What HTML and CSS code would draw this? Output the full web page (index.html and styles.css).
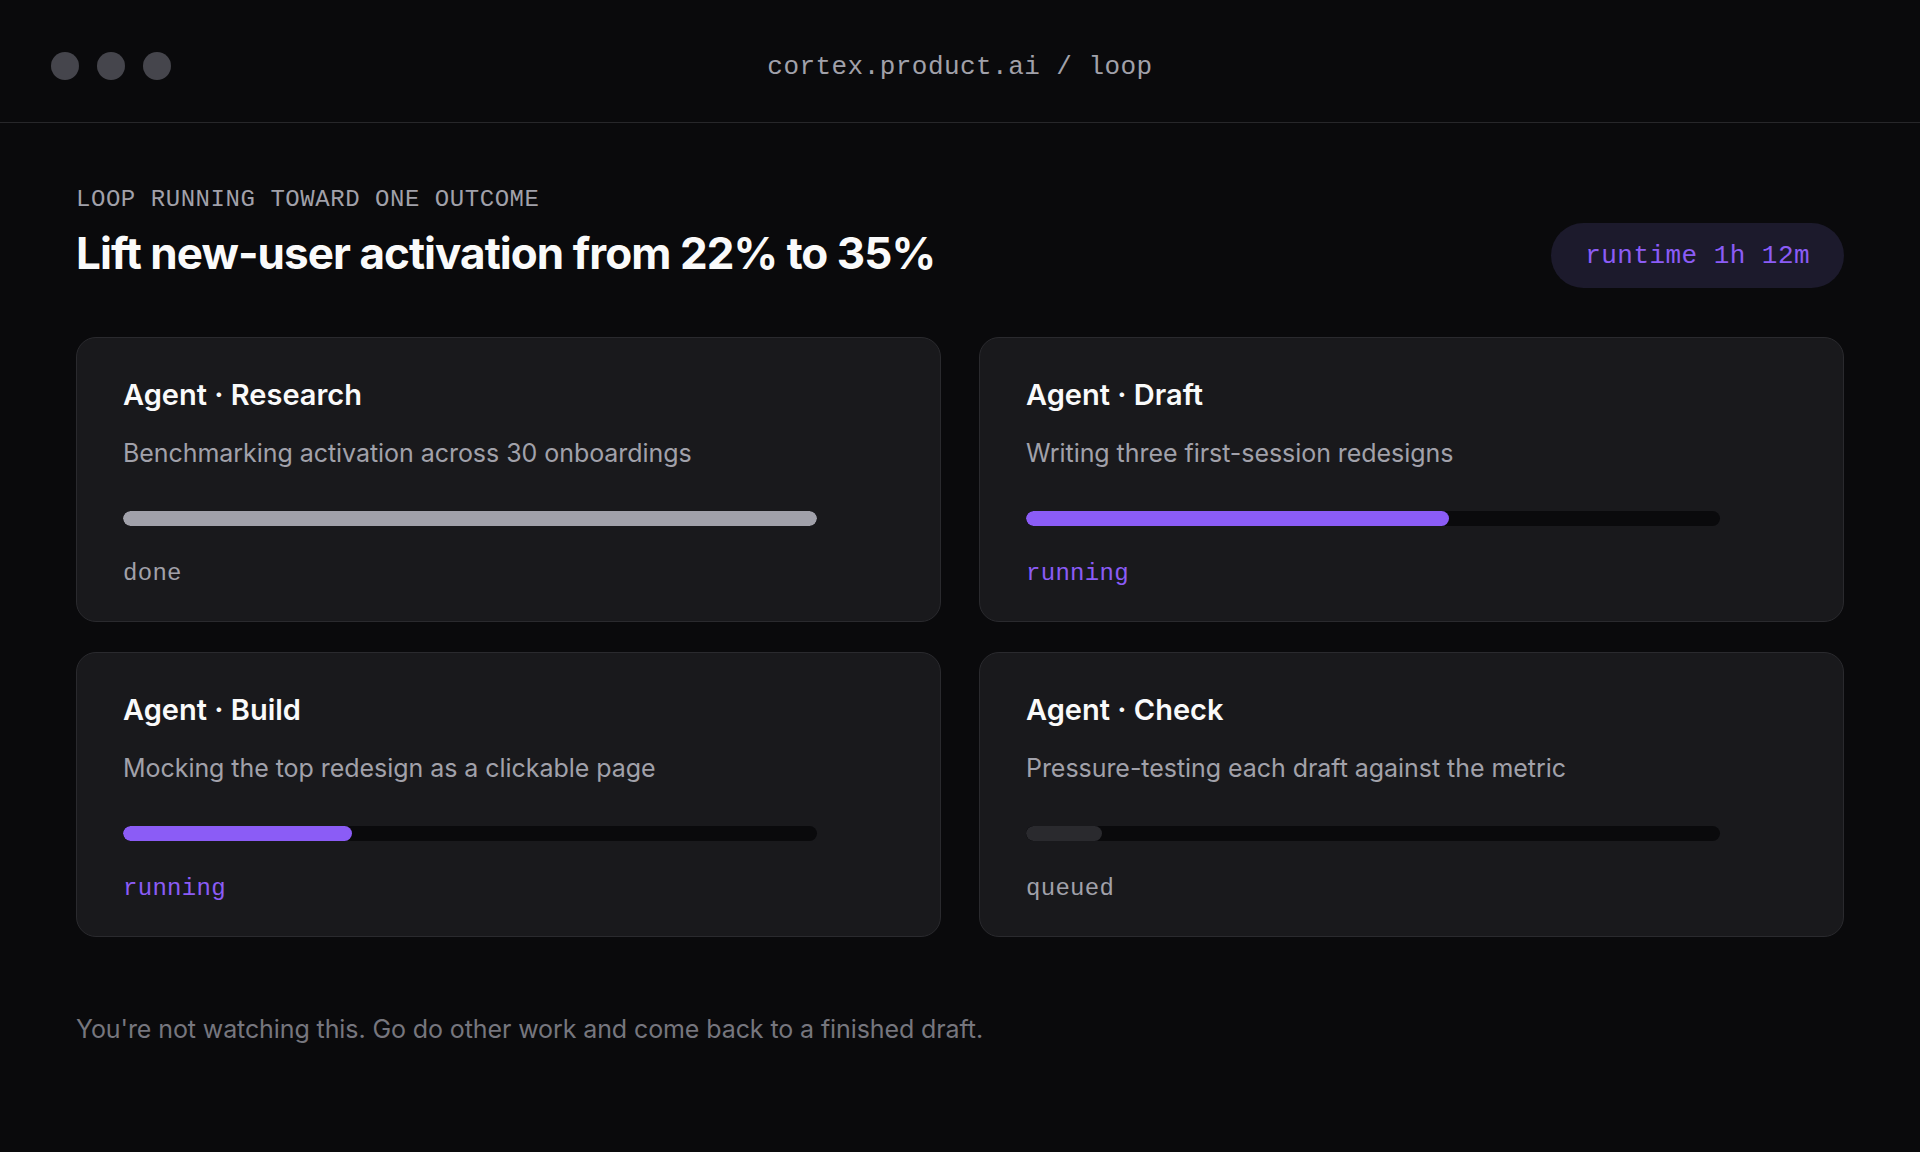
FILE: index.html
```html
<!DOCTYPE html>
<html lang="en">
<head>
<meta charset="utf-8">
<title>cortex.product.ai / loop</title>
<link rel="stylesheet" href="styles.css">
</head>
<body>
<header class="topbar">
  <div class="dots">
    <span class="dot"></span><span class="dot"></span><span class="dot"></span>
  </div>
  <div class="url">cortex.product.ai / loop</div>
  <div class="spacer"></div>
</header>
<main class="main">
  <div class="eyebrow">LOOP RUNNING TOWARD ONE OUTCOME</div>
  <div class="headrow">
    <h1 class="title">Lift new-user activation from 22% to 35%</h1>
    <div class="pill">runtime 1h 12m</div>
  </div>
  <section class="grid">
    <article class="card">
      <h2 class="card-title">Agent · Research</h2>
      <p class="card-desc">Benchmarking activation across 30 onboardings</p>
      <div class="track"><div class="fill fill-done" style="width:100%"></div></div>
      <div class="status status-muted">done</div>
    </article>
    <article class="card">
      <h2 class="card-title">Agent · Draft</h2>
      <p class="card-desc">Writing three first-session redesigns</p>
      <div class="track"><div class="fill fill-run" style="width:61%"></div></div>
      <div class="status status-run">running</div>
    </article>
    <article class="card">
      <h2 class="card-title">Agent · Build</h2>
      <p class="card-desc">Mocking the top redesign as a clickable page</p>
      <div class="track"><div class="fill fill-run" style="width:33%"></div></div>
      <div class="status status-run">running</div>
    </article>
    <article class="card">
      <h2 class="card-title">Agent · Check</h2>
      <p class="card-desc">Pressure-testing each draft against the metric</p>
      <div class="track"><div class="fill fill-queued" style="width:11%"></div></div>
      <div class="status status-muted">queued</div>
    </article>
  </section>
  <p class="footnote">You're not watching this. Go do other work and come back to a finished draft.</p>
</main>
</body>
</html>
```
FILE: styles.css
```css
* { box-sizing: border-box; }
html, body { margin: 0; padding: 0; }
body {
  background: #0a0a0c;
  color: #fafafa;
  font-family: Inter, "Noto Sans", sans-serif;
  width: 1920px;
  height: 1152px;
  overflow: hidden;
}
.topbar {
  height: 123px;
  border-bottom: 1px solid #27272a;
  display: grid;
  grid-template-columns: 1fr auto 1fr;
  align-items: center;
  padding: 10px 51px 0;
}
.dots { display: flex; gap: 18px; }
.dot {
  width: 28px; height: 28px; border-radius: 50%;
  background: #45454c;
  display: block;
}
.url {
  font-family: "Liberation Mono", monospace;
  font-size: 26px;
  letter-spacing: 0.45px;
  color: #a1a1aa;
  margin-top: 2px;
}
.main { padding: 0 76px; }
.eyebrow {
  margin-top: 63px;
  font-family: "Liberation Mono", monospace;
  font-size: 24px;
  line-height: 28px;
  letter-spacing: 0.55px;
  color: #a1a1aa;
}
.headrow {
  margin-top: 9px;
  display: flex;
  justify-content: space-between;
  align-items: center;
}
.title {
  margin: 0 0 5px 0;
  font-size: 44px;
  line-height: 52px;
  font-weight: 700;
  letter-spacing: -0.95px;
  color: #fafafa;
}
.pill {
  height: 65px;
  padding: 0 34px;
  border-radius: 33px;
  background: #1c1a2c;
  color: #8b5cf6;
  font-family: "Liberation Mono", monospace;
  font-size: 26px;
  letter-spacing: 0.45px;
  display: flex;
  align-items: center;
}
.grid {
  margin-top: 49px;
  display: grid;
  grid-template-columns: 1fr 1fr;
  gap: 30px 38px;
}
.card {
  background: #19191c;
  border: 1px solid #2a2a2e;
  border-radius: 20px;
  padding: 39px 46px 33px;
}
.card-title {
  margin: 0;
  font-size: 29px;
  line-height: 36px;
  font-weight: 600;
  letter-spacing: 0;
  color: #fafafa;
}
.card-desc {
  margin: 24px 0 0;
  font-size: 25px;
  line-height: 32px;
  color: #a1a1aa;
  letter-spacing: -0.05px;
}
.track {
  margin-top: 42px;
  width: 90%;
  height: 15px;
  border-radius: 8px;
  background: #0a0a0c;
  overflow: hidden;
}
.fill { height: 100%; border-radius: 8px; }
.fill-done { background: #a1a1aa; }
.fill-run { background: #8b5cf6; }
.fill-queued { background: #2a2a2e; }
.status {
  margin-top: 34px;
  font-family: "Liberation Mono", monospace;
  font-size: 24px;
  line-height: 28px;
  letter-spacing: 0.3px;
}
.status-muted { color: #a1a1aa; }
.status-run { color: #8b5cf6; }
.footnote {
  margin: 76px 0 0;
  font-size: 25px;
  line-height: 32px;
  color: #76767e;
  letter-spacing: -0.1px;
}
```
